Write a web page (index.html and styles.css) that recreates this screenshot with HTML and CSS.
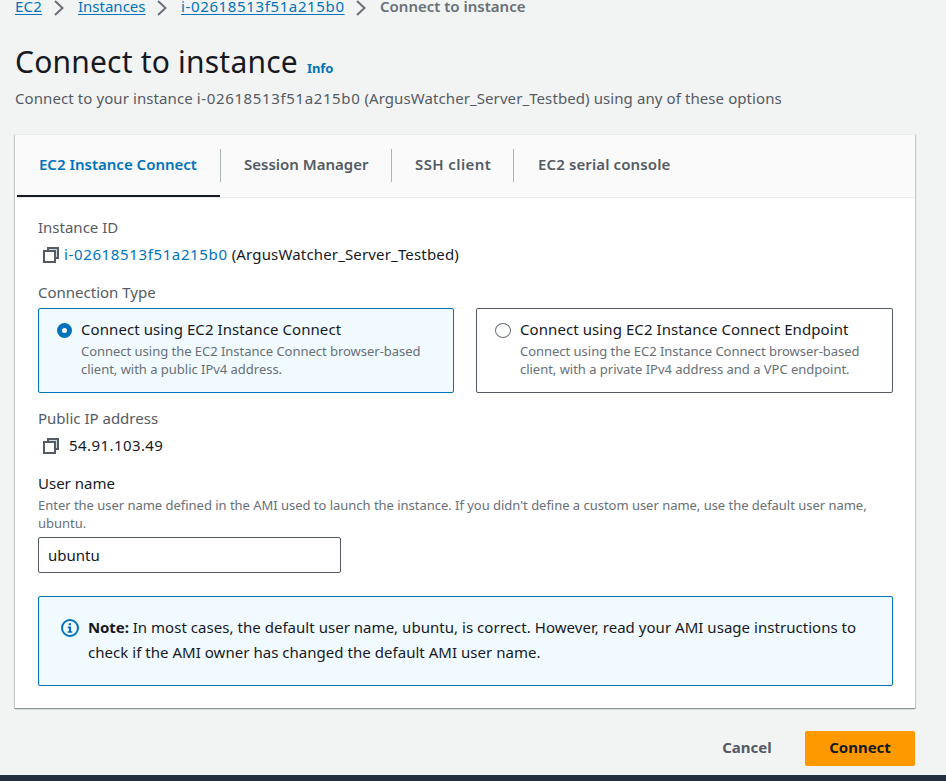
FILE: index.html
```html
<!DOCTYPE html>
<html lang="en">
<head>
<meta charset="utf-8">
<title>Connect to instance</title>
<link rel="stylesheet" href="styles.css">
</head>
<body>
<svg class="sprite" aria-hidden="true">
  <symbol id="chevron" viewBox="0 0 10 16"><path d="M1 1l7.500 7L1 15" fill="none" stroke="#687078" stroke-width="2"/></symbol>
  <symbol id="copy" viewBox="0 0 16 16"><path d="M5 4V1h10v10h-3" fill="#d5dbdb" stroke="#545b64" stroke-width="2"/><path d="M1 4h11v11H1z" fill="#fff" stroke="#545b64" stroke-width="2"/></symbol>
</svg>
<div class="page">
  <nav class="crumbs">
    <a class="c1" href="#">EC2</a><svg class="chev"><use href="#chevron"/></svg>
    <a class="c2" href="#">Instances</a><svg class="chev"><use href="#chevron"/></svg>
    <a class="c3 mono" href="#">i-02618513f51a215b0</a><svg class="chev"><use href="#chevron"/></svg>
    <span class="c4">Connect to instance</span>
  </nav>
  <header class="head">
    <h1><span class="title">Connect to instance</span><a class="info" href="#">Info</a></h1>
    <p class="desc">Connect to your instance <span class="mono">i-02618513f51a215b0</span> (ArgusWatcher_Server_Testbed) using any of these options</p>
  </header>
  <main class="card">
    <div class="tabs">
      <div class="tab t1 active"><span>EC2 Instance Connect</span></div>
      <div class="tab t2"><span>Session Manager</span></div>
      <div class="tab t3"><span>SSH client</span></div>
      <div class="tab t4"><span>EC2 serial console</span></div>
    </div>
    <div class="body">
      <div class="label l1">Instance ID</div>
      <div class="value"><svg class="copy"><use href="#copy"/></svg><span class="id"><a class="mono" href="#">i-02618513f51a215b0</a> (ArgusWatcher_Server_Testbed)</span></div>
      <div class="label">Connection Type</div>
      <div class="tiles">
        <div class="tile selected">
          <span class="radio"></span>
          <div><div class="tile-title">Connect using EC2 Instance Connect</div>
          <div class="hint">Connect using the EC2 Instance Connect browser-based<br>client, with a public IPv4 address.</div></div>
        </div>
        <div class="tile">
          <span class="radio"></span>
          <div><div class="tile-title">Connect using EC2 Instance Connect Endpoint</div>
          <div class="hint">Connect using the EC2 Instance Connect browser-based<br>client, with a private IPv4 address and a VPC endpoint.</div></div>
        </div>
      </div>
      <div class="label">Public IP address</div>
      <div class="value ip"><svg class="copy"><use href="#copy"/></svg><span>54.91.103.49</span></div>
      <label class="label dark" for="user">User name</label>
      <div class="hint">Enter the user name defined in the AMI used to launch the instance. If you didn't define a custom user name, use the default user name,<br>ubuntu.</div>
      <input id="user" class="input" type="text" value="ubuntu">
      <div class="note">
        <svg class="info-icon" viewBox="0 0 18 18"><circle cx="9" cy="9" r="8" fill="none" stroke="#0073bb" stroke-width="2"/><path d="M7.700 4.300h2.300v2H7.700zM6.700 7.600H10v4.600h1.300v1.600H6.600v-1.600H8V9.200H6.700z" fill="#0073bb"/></svg>
        <p><b>Note:</b> In most cases, the default user name, ubuntu, is correct. However, read your AMI usage instructions to<br>check if the AMI owner has changed the default AMI user name.</p>
      </div>
    </div>
  </main>
  <div class="actions">
    <button class="btn cancel" type="button">Cancel</button>
    <button class="btn primary" type="button">Connect</button>
  </div>
  <footer class="footer"></footer>
</div>
</body>
</html>
```
FILE: styles.css
```css
* { box-sizing: border-box; }
body { margin: 0; background: #f2f3f3; color: #16191f; font: 15px/24px "Noto Sans", sans-serif; overflow: hidden; }
h1, p { margin: 0; }
a { color: #0073bb; text-decoration: none; }
.sprite { display: none; }
.page { height: 781px; display: flex; flex-direction: column; white-space: nowrap; }
.crumbs { display: flex; align-items: center; height: 12px; line-height: 12px; margin-left: 15px; flex: none; }
.crumbs a { text-decoration: underline; text-underline-offset: 2px; }
.crumbs .c1 { width: 27px; letter-spacing: .2px; }
.crumbs .c2 { width: 67px; }
.crumbs .c3 { width: 163px; }
.mono { letter-spacing: .63px; }
.chev { width: 10px; height: 16px; margin: 3px 14px 0 12px; flex: none; }
.c4 { font-weight: 600; color: #687078; }
.head { margin-left: 15px; height: 122px; padding-top: 30px; flex: none; }
h1 { display: flex; align-items: baseline; height: 44px; font-size: 30px; line-height: 40px; font-weight: 400; }
.title { width: 292px; letter-spacing: .2px; }
.info { font-size: 13px; font-weight: 700; letter-spacing: -.1px; }
.desc { color: #545b64; letter-spacing: .09px; }
.desc .mono { letter-spacing: .63px; }
.card { margin: 0 31px 0 15px; height: 574px; flex: none; background: #fff; border-top: 1px solid #eaeded; box-shadow: 0 1px 0 0 #879596, 0 1px 1px 0 rgba(0,28,36,.3), 1px 1px 1px 0 rgba(0,28,36,.15), -1px 1px 1px 0 rgba(0,28,36,.15); }
.tabs { display: flex; height: 63px; padding-left: 2px; background: #fafafa; border-bottom: 1px solid #eaeded; }
.tab { position: relative; height: 62px; padding-top: 17px; font-weight: 600; color: #545b64; }
.t1 { width: 203px; padding-left: 22px; }
.t2 { width: 171px; padding-left: 24px; }
.t3 { width: 122px; padding-left: 24px; letter-spacing: .4px; }
.t4 { padding-left: 25px; letter-spacing: .12px; }
.tab + .tab::before { content: ""; position: absolute; left: 0; top: 14px; height: 33px; width: 1px; background: #aab7b8; }
.tab.active { color: #0073bb; border-bottom: 2px solid #16191f; }
.body { padding: 17px 22px 0 23px; }
.label { display: block; color: #545b64; }
.dark { color: #16191f; }
.value { display: flex; align-items: center; height: 24px; margin: 3px 0 14px 5px; gap: 5px; letter-spacing: .16px; }
.value.ip { gap: 10px; letter-spacing: .42px; }
.copy { width: 16px; height: 16px; margin-top: 2px; flex: none; }
.tiles { display: grid; grid-template-columns: 416px 417px; column-gap: 22px; margin: 4px 0 13px; }
.tile { display: flex; height: 85px; padding: 8px 0 0 18px; border: 1px solid #545b64; border-radius: 2px; }
.tile.selected { background: #f1faff; border-color: #0073bb; }
.tile-title { letter-spacing: .08px; }
.radio { width: 16px; height: 15px; margin: 6px 9px 0 0; border: 1px solid #687078; border-radius: 50%; background: #fff; flex: none; }
.selected .radio { width: 15px; border: 5px solid #0073bb; }
.hint { font-size: 13px; line-height: 18px; color: #687078; margin-top: 1px; letter-spacing: -.025px; }
.input { display: block; width: 303px; height: 36px; margin-top: 5px; padding: 0 9px; border: 1px solid #545b64; border-radius: 2px; font: inherit; color: inherit; background: #fff; }
.note { display: flex; height: 90px; margin-top: 23px; padding: 18px 0 0 22px; border: 1px solid #0073bb; border-radius: 2px; background: #f1faff; line-height: 25px; letter-spacing: .035px; }
.note b { letter-spacing: -.1px; }
.info-icon { width: 18px; height: 18px; margin: 4px 9px 0 0; flex: none; }
.actions { display: flex; justify-content: flex-end; margin: 23px 31px 0 0; height: 35px; flex: none; }
.btn { border: 0; border-radius: 2px; background: none; font: 700 15px/24px "Noto Sans", sans-serif; color: #545b64; padding: 0 0 3px; }
.cancel { width: 50px; margin-right: 33px; }
.primary { width: 110px; background: #ff9900; color: #16191f; }
.footer { height: 6px; margin-top: auto; background: #232f3e; flex: none; }
```
